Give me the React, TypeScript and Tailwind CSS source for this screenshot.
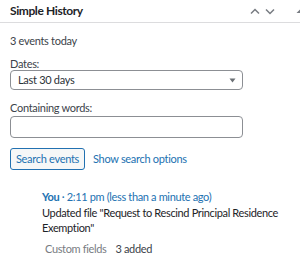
import React from "react";

const Chevron = ({ up }: { up?: boolean }) => (
  <svg width="10" height="7" viewBox="0 0 10 7" className="text-[#787c82]">
    <path
      d={up ? "M1 5.5 L5 1.5 L9 5.5" : "M1 1.5 L5 5.5 L9 1.5"}
      fill="none"
      stroke="currentColor"
      strokeWidth="1.5"
    />
  </svg>
);

export default function App() {
  return (
    <div className="w-[300px] h-[263px] bg-white overflow-hidden text-[11px] tracking-[-0.3px] text-[#3c434a] font-['Lato',sans-serif]">
      <div className="h-[23px] border-b border-[#dcdcde] flex items-center pl-[10px]">
        <h2 className="font-bold text-[12px] tracking-[-0.4px] text-[#1d2327] flex-1">Simple History</h2>
        <div className="flex items-center gap-[5px]">
          <Chevron up />
          <Chevron />
          <svg width="10" height="6" viewBox="0 0 10 6" className="ml-[15px] -mr-[5px] text-[#787c82]">
            <path d="M1.5 5 L5 1.5 L8.5 5 Z" fill="currentColor" />
          </svg>
        </div>
      </div>

      <div className="pl-[10px] pt-[9px]">
        <p className="leading-[18px]">3 events today</p>

        <label className="block mt-[8px] leading-[12px]">Dates:</label>
        <div className="w-[233px] h-[20px] border border-[#8c8f94] rounded-[4px] flex items-center justify-between pl-[7px] pr-[6px]">
          <span className="text-[#2c3338]">Last 30 days</span>
          <svg width="7" height="5" viewBox="0 0 7 5">
            <path d="M0.5 0.5 L6.5 0.5 L3.5 4.5 Z" fill="#6b7075" />
          </svg>
        </div>

        <label className="block mt-[12px] mb-[2px] leading-[12px]">Containing words:</label>
        <div className="w-[233px] h-[22px] border border-[#8c8f94] rounded-[4px]" />

        <div className="flex items-center mt-[10px] gap-[8px]">
          <button className="h-[22px] w-[75px] border border-[#2271b1] rounded-[3px] bg-[#f6f7f7] text-[#2271b1] whitespace-nowrap">
            Search events
          </button>
          <a className="text-[#2271b1]">Show search options</a>
        </div>

        <div className="pl-[32px] mt-[18px] tracking-[-0.35px]">
          <p className="leading-[17px] text-[#2271b1]">
            <span className="font-bold">You</span> · 2:11 pm (less than a minute ago)
          </p>
          <p className="leading-[15px] text-[#1d2327]">
            Updated file "Request to Rescind Principal Residence Exemption"
          </p>
          <div className="flex gap-[9px] mt-[6px] pl-[3px]">
            <span className="text-[#787c82]">Custom fields</span>
            <span>3 added</span>
          </div>
        </div>
      </div>
    </div>
  );
}
